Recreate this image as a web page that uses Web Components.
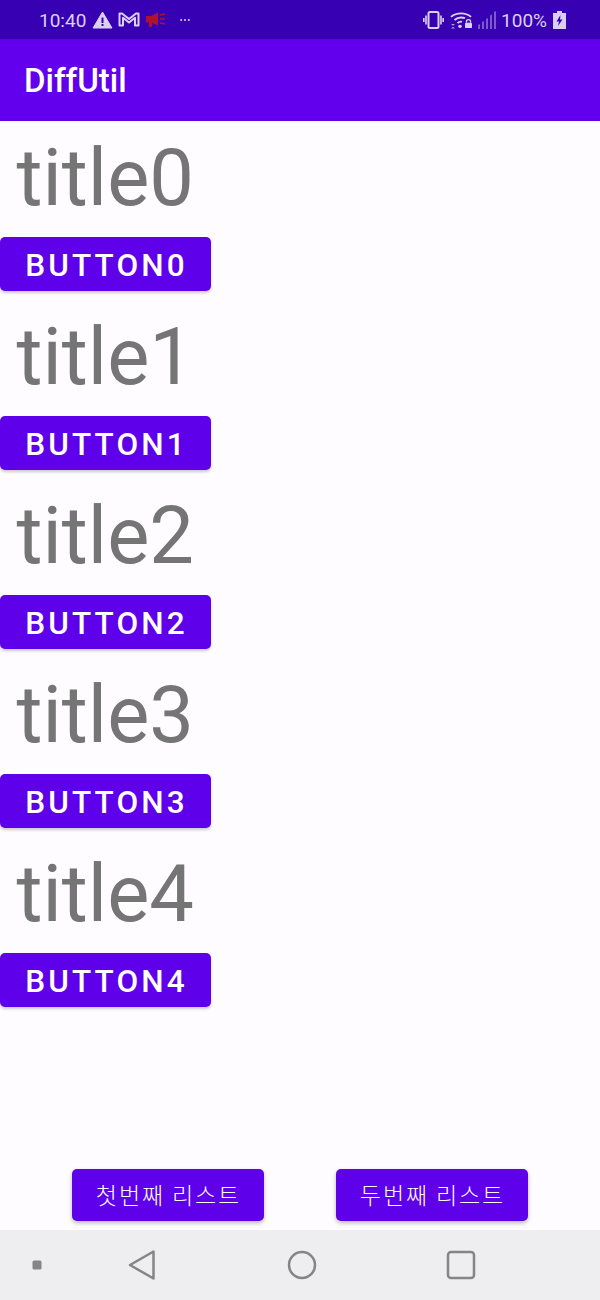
<!DOCTYPE html>
<html>
<head>
<meta charset="utf-8">
<title>DiffUtil</title>
<style>
  html, body { margin: 0; padding: 0; }
  body { background: #fefcff; font-family: Roboto, "Noto Sans CJK KR", sans-serif; }
</style>
</head>
<body>
<app-screen>
  <status-bar></status-bar>
  <app-bar>DiffUtil</app-bar>
  <item-list>
    <list-item title="title0" label="BUTTON0"></list-item>
    <list-item title="title1" label="BUTTON1"></list-item>
    <list-item title="title2" label="BUTTON2"></list-item>
    <list-item title="title3" label="BUTTON3"></list-item>
    <list-item title="title4" label="BUTTON4"></list-item>
  </item-list>
  <bottom-actions>
    <action-button>첫번째 리스트</action-button>
    <action-button>두번째 리스트</action-button>
  </bottom-actions>
  <nav-bar></nav-bar>
</app-screen>
<script>
  class AppScreen extends HTMLElement {
    constructor() {
      super();
      this.attachShadow( { mode: 'open' } ).innerHTML = `
      <style>
        :host { display: flex; flex-direction: column; width: 600px; height: 1300px; overflow: hidden; }
      </style>
      <slot></slot>`;
    }
  }

  class StatusBar extends HTMLElement {
    constructor() {
      super();
      this.attachShadow( { mode: 'open' } ).innerHTML = `
      <style>
        :host { display: flex; align-items: center; flex: 0 0 39px; height: 39px; background: #3700b3; color: #dcd0f2;
          font: 400 19px Roboto, sans-serif; padding: 0 0 0 39px; box-sizing: border-box; }
        svg { display: block; flex: none; }
        span { padding-top: 1px; }
        .right { margin-left: auto; display: flex; align-items: center; }
      </style>
      <span>10:40</span>
      <!-- warning -->
      <svg style="margin-left:6px" width="21" height="18" viewBox="0 0 21 18">
        <path fill="#dcd0f2" stroke="#dcd0f2" stroke-linejoin="round" d="M10.5 1 L20 17 H1 Z"/>
        <rect x="9.5" y="6.5" width="2" height="5.5" fill="#3700b3"/><rect x="9.5" y="13" width="2" height="2" fill="#3700b3"/>
      </svg>
      <!-- gmail -->
      <svg style="margin-left:5px" width="22" height="15" viewBox="0 0 22 15">
        <path fill="none" stroke="#dcd0f2" stroke-width="2" stroke-linejoin="round" d="M1.5 13.5 V1.5 H4 L11 7 L18 1.5 H20.5 V13.5 H17 V5.8 L11 10.5 L5 5.8 V13.5 Z"/>
      </svg>
      <!-- megaphone -->
      <svg style="margin-left:6px" width="20" height="16" viewBox="0 0 20 16">
        <path fill="#b0122e" d="M0 4 H5 L12 .5 V13.5 L6 11 V15 H3 V10.5 H0 Z"/>
        <path stroke="#b0122e" stroke-width="1.6" d="M14 3 L19 2 M14 7 H19 M14 11 L19 12"/>
      </svg>
      <!-- more notifications -->
      <svg style="margin-left:14px" width="10" height="4" viewBox="0 0 10 4">
        <circle cx="1.2" cy="2" r="1" fill="#dcd0f2"/><circle cx="5" cy="2" r="1" fill="#dcd0f2"/><circle cx="8.8" cy="2" r="1" fill="#dcd0f2"/>
      </svg>
      <div class="right">
        <!-- vibrate -->
        <svg width="21" height="18" viewBox="0 0 21 18">
          <rect x="5.5" y="1" width="10" height="16" rx="1.5" fill="none" stroke="#dcd0f2" stroke-width="2"/>
          <path stroke="#dcd0f2" stroke-width="1.6" d="M3 4.5 V13.5 M.8 7 V11 M18 4.5 V13.5 M20.2 7 V11"/>
        </svg>
        <!-- wifi with lock -->
        <svg style="margin-left:6px" width="23" height="18" viewBox="0 0 23 20" preserveAspectRatio="none">
          <g fill="none" stroke="#dcd0f2" stroke-width="2">
            <path d="M1 6.5 A15 15 0 0 1 21 6.5"/><path d="M4.5 10 A10 10 0 0 1 15 8"/><path d="M7.5 13.5 A5 5 0 0 1 12 12"/>
          </g>
          <circle cx="10" cy="17" r="1.8" fill="#dcd0f2"/>
          <path d="M1 14.5 h4 l-2 2 Z M1 19.5 h4 l-2 -2 Z" fill="#dcd0f2" opacity=".75"/>
          <rect x="15" y="13" width="7" height="6" rx="1" fill="#dcd0f2"/>
          <path d="M16.5 13 V11.5 A2 2 0 0 1 20.5 11.5 V13" fill="none" stroke="#dcd0f2" stroke-width="1.3"/>
        </svg>
        <!-- signal -->
        <svg style="margin-left:5px" width="18" height="18" viewBox="0 0 18 18">
          <path fill="#7d5acb" d="M0 14 L2 13 V18 H0 Z M4 11 L6 10 V18 H4 Z M8 8 L10 7 V18 H8 Z M12 4.5 L14 3.5 V18 H12 Z M16 1 L18 0 V18 H16 Z"/>
        </svg>
        <span style="margin-left:5px">100%</span>
        <!-- battery charging -->
        <svg style="margin-left:6px;margin-right:34px" width="13" height="18" viewBox="0 0 13 18">
          <path fill="#dcd0f2" d="M4 0 H9 V2 H13 V18 H0 V2 H4 Z"/>
          <path fill="#3700b3" d="M7.5 4 L3.5 10.5 H6 L5 15 L9.5 8.5 H7 Z"/>
        </svg>
      </div>`;
    }
  }

  class AppBar extends HTMLElement {
    constructor() {
      super();
      this.attachShadow( { mode: 'open' } ).innerHTML = `
      <style>
        :host { display: flex; align-items: center; flex: 0 0 82px; height: 82px; box-sizing: border-box; padding: 0 24px;
          background: #6200ee; color: #fff; font: 500 33px Roboto, sans-serif; }
      </style>
      <slot></slot>`;
    }
  }

  class ItemList extends HTMLElement {
    constructor() {
      super();
      this.attachShadow( { mode: 'open' } ).innerHTML = `
      <style>
        :host { display: flex; flex-direction: column; flex: 1 1 auto; }
      </style>
      <slot></slot>`;
    }
  }

  class ListItem extends HTMLElement {
    constructor() {
      super();
      const title = this.getAttribute( 'title' );
      const label = this.getAttribute( 'label' );
      this.attachShadow( { mode: 'open' } ).innerHTML = `
      <style>
        :host { display: flex; flex-direction: column; align-items: flex-start; height: 179px; }
        .title { font: 400 79.5px/1 Roboto, sans-serif; color: #757575; padding: 17px 0 0 16.5px; box-sizing: border-box; height: 116px; }
        .btn { display: flex; align-items: center; justify-content: center; width: 211px; height: 54px; box-sizing: border-box; padding: 2px 0 0 2px; border-radius: 5px;
          background: #5f00ea; color: #fff; font: 500 31.5px Roboto, sans-serif; letter-spacing: 3.1px;
          box-shadow: 0 2px 3px rgba(0,0,0,.2); }
      </style>
      <div class="title">${title}</div>
      <div class="btn">${label}</div>`;
    }
  }

  class BottomActions extends HTMLElement {
    constructor() {
      super();
      this.attachShadow( { mode: 'open' } ).innerHTML = `
      <style>
        :host { display: flex; justify-content: space-between; flex: none; height: 61px; padding: 0 72px; box-sizing: border-box; }
      </style>
      <slot></slot>`;
    }
  }

  class ActionButton extends HTMLElement {
    constructor() {
      super();
      this.attachShadow( { mode: 'open' } ).innerHTML = `
      <style>
        :host { display: flex; align-items: center; justify-content: center; width: 192px; height: 52px; box-sizing: border-box; padding: 0 0 2px 1px; border-radius: 5px;
          background: #5f00ea; color: #fff; font: 300 23px "Noto Sans CJK KR", sans-serif; letter-spacing: 1.9px;
          box-shadow: 0 2px 4px rgba(0,0,0,.28); }
      </style>
      <slot></slot>`;
    }
  }

  class NavBar extends HTMLElement {
    constructor() {
      super();
      this.attachShadow( { mode: 'open' } ).innerHTML = `
      <style>
        :host { display: grid; grid-template-columns: 74px 136px 184px 134px 1fr; align-items: center; flex: 0 0 70px; height: 70px; background: #eeedef; }
        svg { display: block; justify-self: center; }
      </style>
      <svg width="12" height="12" viewBox="0 0 12 12"><rect x="1.5" y="1.5" width="9" height="9" rx="1.5" fill="#858585"/></svg>
      <svg width="30" height="32" viewBox="0 0 30 32"><path fill="none" stroke="#858585" stroke-width="2.5" stroke-linejoin="round" d="M3 16 L26.5 2.5 V29.5 Z"/></svg>
      <svg width="30" height="30" viewBox="0 0 30 30"><circle cx="15" cy="15" r="13" fill="none" stroke="#858585" stroke-width="2.5"/></svg>
      <svg width="30" height="30" viewBox="0 0 30 30"><rect x="2" y="2" width="26" height="26" rx="3" fill="none" stroke="#858585" stroke-width="2.5"/></svg>`;
    }
  }

  customElements.define( 'app-screen', AppScreen );
  customElements.define( 'status-bar', StatusBar );
  customElements.define( 'app-bar', AppBar );
  customElements.define( 'item-list', ItemList );
  customElements.define( 'list-item', ListItem );
  customElements.define( 'bottom-actions', BottomActions );
  customElements.define( 'action-button', ActionButton );
  customElements.define( 'nav-bar', NavBar );
</script>
</body>
</html>
